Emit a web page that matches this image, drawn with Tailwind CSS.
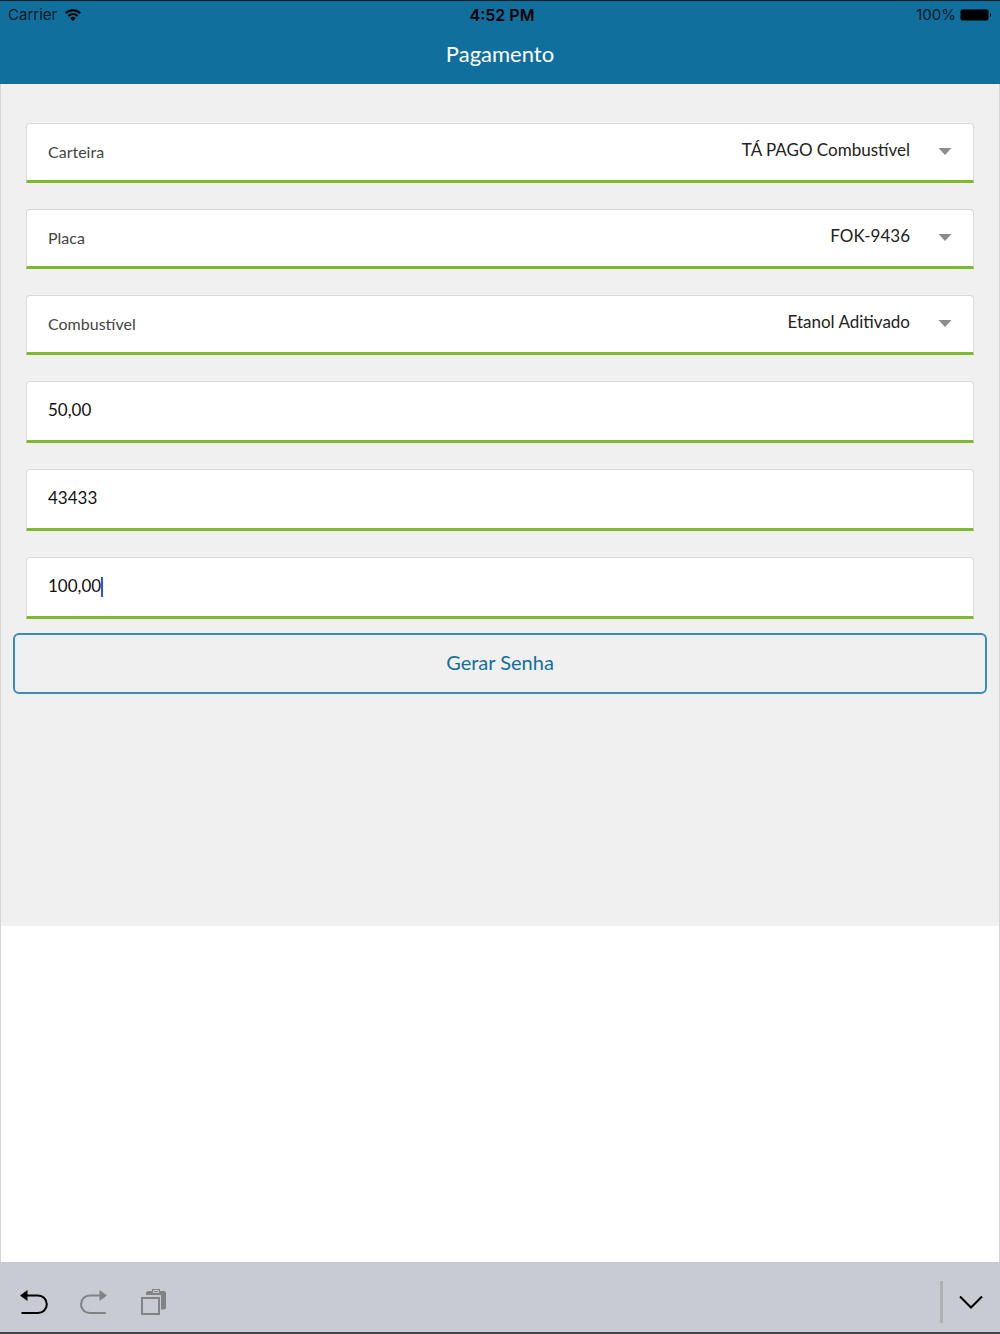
<!DOCTYPE html>
<html lang="pt-BR">
  <head>
    <meta charset="UTF-8" />
    <meta name="viewport" content="width=device-width, initial-scale=1.0" />
    <title>Pagamento</title>
    <!-- Tailwind -->
    <script src="https://cdn.jsdelivr.net/npm/@tailwindcss/browser@4"></script>
  </head>
  <body class="min-h-screen flex flex-col bg-white font-['Lato',sans-serif] text-[#222222]">
    <header class="bg-[#116f9e] border-t border-[#0a1a24] h-[84px] shrink-0">
      <!-- Status bar -->
      <div class="grid grid-cols-3 items-center h-7 px-2 font-['Inter',sans-serif] text-[15px] text-[#06161f]">
        <div class="flex items-center gap-2">
          <span>Carrier</span>
          <svg class="w-4 h-3" viewBox="0 0 16 12" fill="none" stroke="black" stroke-width="2">
            <path d="M.8 4.2a10.2 10.2 0 0 1 14.4 0" />
            <path d="M3.4 7a6.5 6.5 0 0 1 9.2 0" />
            <path d="M8 12 5.3 9.2a3.8 3.8 0 0 1 5.4 0z" fill="black" stroke="none" />
          </svg>
        </div>
        <span class="pl-1 text-center text-base font-semibold text-black">4:52 PM</span>
        <div class="flex items-center justify-end gap-1">
          <span>100%</span>
          <svg class="w-8 h-3" viewBox="0 0 32 12">
            <rect x=".5" y=".5" width="28" height="11" rx="2" fill="black" stroke="#083850" />
            <path d="M30 4a2.4 2.4 0 0 1 0 4z" fill="black" />
          </svg>
        </div>
      </div>
      <h1 class="text-center text-[22px] leading-[50px] text-white">Pagamento</h1>
    </header>

    <main class="flex-1 flex flex-col border-x border-[#d4d4d4]">
      <form class="bg-[#f0f0f0] px-3 pt-[39px] pb-58" onsubmit="event.preventDefault()">
        <div class="flex flex-col gap-[26px] px-[13px]">
          <div class="relative flex items-center h-[60px] bg-white border border-[#d9d9d9] border-b-3 border-b-[#7fb92f] rounded-t-sm">
            <label for="carteira" class="pl-[21px] text-base text-[#444444]">Carteira</label>
            <select id="carteira" class="flex-1 h-full pr-[63px] pb-1 appearance-none text-right text-[17px] outline-none">
              <option>TÁ PAGO Combustível</option>
            </select>
            <svg class="absolute right-[21px] mb-[2px] w-[14px] h-[7px] pointer-events-none" viewBox="0 0 14 7" fill="#8c8c8c">
              <path d="M.5 0h13L7 7z" />
            </svg>
          </div>
          <div class="relative flex items-center h-[60px] bg-white border border-[#d9d9d9] border-b-3 border-b-[#7fb92f] rounded-t-sm">
            <label for="placa" class="pl-[21px] text-base text-[#444444]">Placa</label>
            <select id="placa" class="flex-1 h-full pr-[63px] pb-1 appearance-none text-right text-[17px] outline-none">
              <option>FOK-9436</option>
            </select>
            <svg class="absolute right-[21px] mb-[2px] w-[14px] h-[7px] pointer-events-none" viewBox="0 0 14 7" fill="#8c8c8c">
              <path d="M.5 0h13L7 7z" />
            </svg>
          </div>
          <div class="relative flex items-center h-[60px] bg-white border border-[#d9d9d9] border-b-3 border-b-[#7fb92f] rounded-t-sm">
            <label for="combustivel" class="pl-[21px] text-base text-[#444444]">Combustível</label>
            <select id="combustivel" class="flex-1 h-full pr-[63px] pb-1 appearance-none text-right text-[17px] outline-none">
              <option>Etanol Aditivado</option>
            </select>
            <svg class="absolute right-[21px] mb-[2px] w-[14px] h-[7px] pointer-events-none" viewBox="0 0 14 7" fill="#8c8c8c">
              <path d="M.5 0h13L7 7z" />
            </svg>
          </div>
          <input
            type="text"
            inputmode="decimal"
            aria-label="Litros"
            value="50,00"
            class="w-full h-[62px] px-[21px] pb-1 bg-white border border-[#d9d9d9] border-b-3 border-b-[#7fb92f] rounded-t-sm text-[17px] text-[#111111] outline-none"
          />
          <input
            type="text"
            inputmode="numeric"
            aria-label="Hodômetro"
            value="43433"
            class="w-full h-[62px] px-[21px] pb-1 bg-white border border-[#d9d9d9] border-b-3 border-b-[#7fb92f] rounded-t-sm text-[17px] text-[#111111] outline-none"
          />
          <div class="flex items-center h-[62px] px-[21px] bg-white border border-[#d9d9d9] border-b-3 border-b-[#7fb92f] rounded-t-sm">
            <input
              type="text"
              inputmode="decimal"
              aria-label="Valor"
              value="100,00"
              class="h-full pb-1 [field-sizing:content] text-[17px] text-[#111111] caret-transparent outline-none"
            />
            <!-- Caret -->
            <span class="w-[2px] h-5 bg-[#304ff0]"></span>
          </div>
        </div>
        <button
          type="submit"
          class="mt-[14px] w-full h-[61px] pb-1 border-2 border-[#3a8db5] rounded-md text-xl text-[#116f9e]"
        >
          Gerar Senha
        </button>
      </form>
    </main>

    <!-- Keyboard toolbar -->
    <footer class="flex items-center h-[72px] shrink-0 pt-[10px] pl-5 pr-[17px] bg-[#c8cbd3] border-b-2 border-[#40434a]">
      <div class="flex items-center gap-8">
        <button type="button" aria-label="Desfazer" class="text-black">
          <svg class="w-7 h-7" viewBox="0 0 28 28" fill="none" stroke="currentColor" stroke-width="2">
            <path d="M5 7.5h13a8.8 8.8 0 0 1 0 17.6H1.5" />
            <path d="M0 7.5 7.5 2v11z" fill="currentColor" stroke="none" />
          </svg>
        </button>
        <button type="button" aria-label="Refazer" class="text-[#808286]">
          <svg class="w-7 h-7" viewBox="0 0 28 28" fill="none" stroke="currentColor" stroke-width="2">
            <path d="M22 7.5H9.800a8.800 8.800 0 0 0 0 17.600h16" />
            <path d="M27 7.5 19.500 2v11z" fill="currentColor" stroke="none" />
          </svg>
        </button>
        <button type="button" aria-label="Colar" class="text-[#808286]">
          <svg class="w-7 h-7" viewBox="0 0 28 28" fill="none">
            <path d="M6 7V5.500q0-2.500 2.500-2.500H12V1h8v2h3.500Q26 3 26 5.500V19q0 2.500-2.500 2.500H21V7z" fill="currentColor" />
            <path d="M13.500 2.500h5v2h-5z" stroke="#c8cbd3" />
            <path d="M2 10h17v16H2z" stroke="currentColor" stroke-width="2" />
          </svg>
        </button>
      </div>
      <div class="ml-auto flex items-center gap-4">
        <span class="w-[3px] h-[42px] bg-[#aeb0b3]"></span>
        <button type="button" aria-label="Fechar teclado">
          <svg class="w-6 h-7" viewBox="0 0 24 28" fill="none" stroke="black" stroke-width="2">
            <path d="M1 8.500 12 19.500 23 8.500" />
          </svg>
        </button>
      </div>
    </footer>
  </body>
</html>
